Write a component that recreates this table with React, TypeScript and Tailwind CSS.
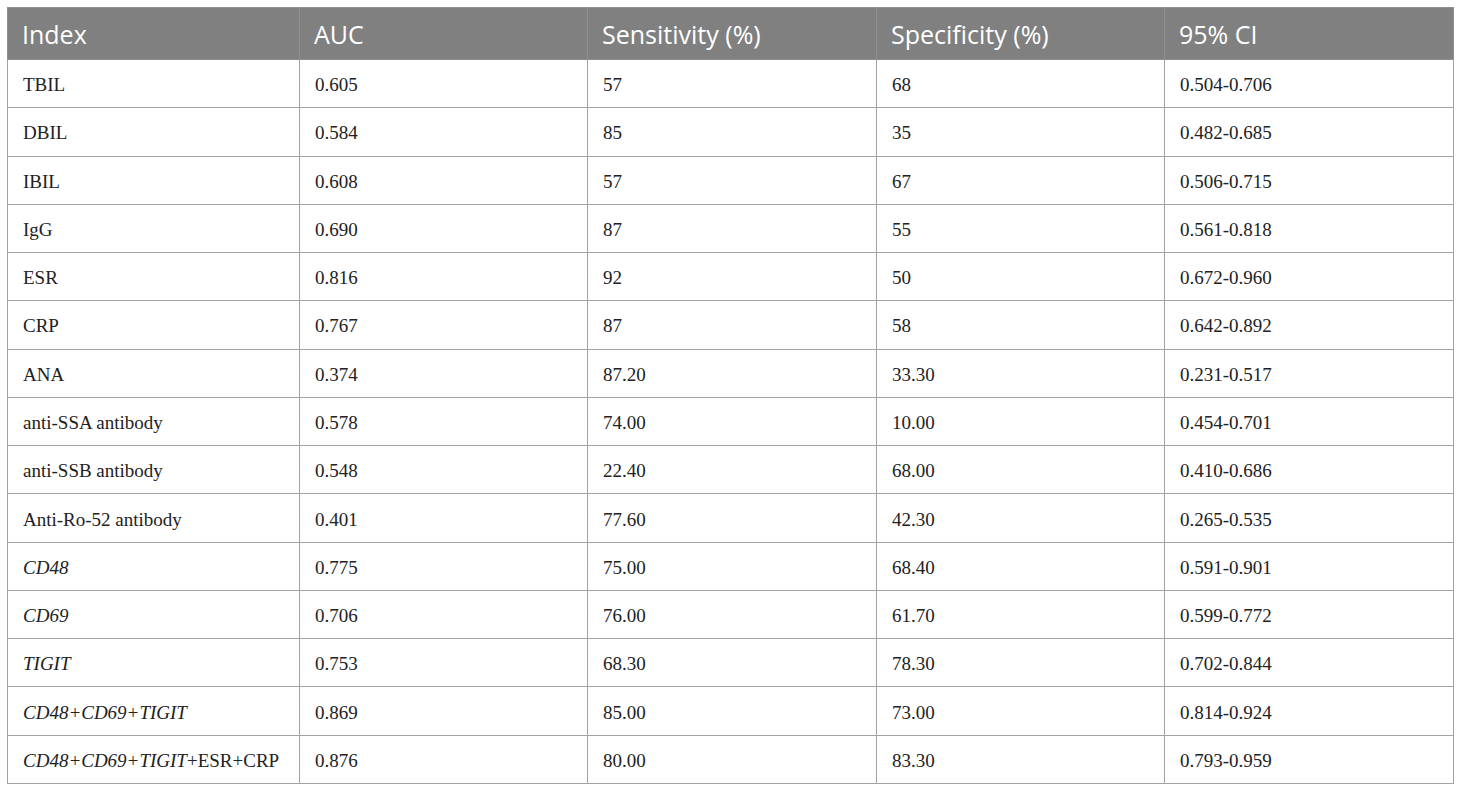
const ROWS: { index: React.ReactNode; auc: string; sens: string; spec: string; ci: string }[] = [
  { index: 'TBIL', auc: '0.605', sens: '57', spec: '68', ci: '0.504-0.706' },
  { index: 'DBIL', auc: '0.584', sens: '85', spec: '35', ci: '0.482-0.685' },
  { index: 'IBIL', auc: '0.608', sens: '57', spec: '67', ci: '0.506-0.715' },
  { index: 'IgG', auc: '0.690', sens: '87', spec: '55', ci: '0.561-0.818' },
  { index: 'ESR', auc: '0.816', sens: '92', spec: '50', ci: '0.672-0.960' },
  { index: 'CRP', auc: '0.767', sens: '87', spec: '58', ci: '0.642-0.892' },
  { index: 'ANA', auc: '0.374', sens: '87.20', spec: '33.30', ci: '0.231-0.517' },
  { index: 'anti-SSA antibody', auc: '0.578', sens: '74.00', spec: '10.00', ci: '0.454-0.701' },
  { index: 'anti-SSB antibody', auc: '0.548', sens: '22.40', spec: '68.00', ci: '0.410-0.686' },
  { index: 'Anti-Ro-52 antibody', auc: '0.401', sens: '77.60', spec: '42.30', ci: '0.265-0.535' },
  { index: <i>CD48</i>, auc: '0.775', sens: '75.00', spec: '68.40', ci: '0.591-0.901' },
  { index: <i>CD69</i>, auc: '0.706', sens: '76.00', spec: '61.70', ci: '0.599-0.772' },
  { index: <i>TIGIT</i>, auc: '0.753', sens: '68.30', spec: '78.30', ci: '0.702-0.844' },
  { index: <i>CD48+CD69+TIGIT</i>, auc: '0.869', sens: '85.00', spec: '73.00', ci: '0.814-0.924' },
  {
    index: (
      <>
        <i>CD48+CD69+TIGIT</i>+ESR+CRP
      </>
    ),
    auc: '0.876',
    sens: '80.00',
    spec: '83.30',
    ci: '0.793-0.959',
  },
];

const HEAD = ['Index', 'AUC', 'Sensitivity (%)', 'Specificity (%)', '95% CI'];

export default function App() {
  return (
    <div className="w-[1460px] h-[792px] bg-white pt-[7px] pl-[7px]">
      <table className="w-[1446px] border-collapse table-fixed">
        <colgroup>
          <col className="w-[292px]" />
          <col className="w-[288px]" />
          <col className="w-[289px]" />
          <col className="w-[288px]" />
          <col className="w-[289px]" />
        </colgroup>
        <thead>
          <tr className="h-[52px] bg-[#7f807f]">
            {HEAD.map((h) => (
              <th
                key={h}
                className="border border-[#8f8f8f] text-left font-normal text-white text-[25px] leading-none pl-[14px] pt-[1px] font-['Open_Sans',sans-serif]"
              >
                {h}
              </th>
            ))}
          </tr>
        </thead>
        <tbody className="font-['Liberation_Serif',serif] text-[19px] text-[#222]">
          {ROWS.map((r, i) => (
            <tr key={i} className="h-[48.27px]">
              {[r.index, r.auc, r.sens, r.spec, r.ci].map((c, j) => (
                <td key={j} className="border border-[#a3a3a3] pl-[15px] pt-[2px] leading-none">
                  {c}
                </td>
              ))}
            </tr>
          ))}
        </tbody>
      </table>
    </div>
  );
}
